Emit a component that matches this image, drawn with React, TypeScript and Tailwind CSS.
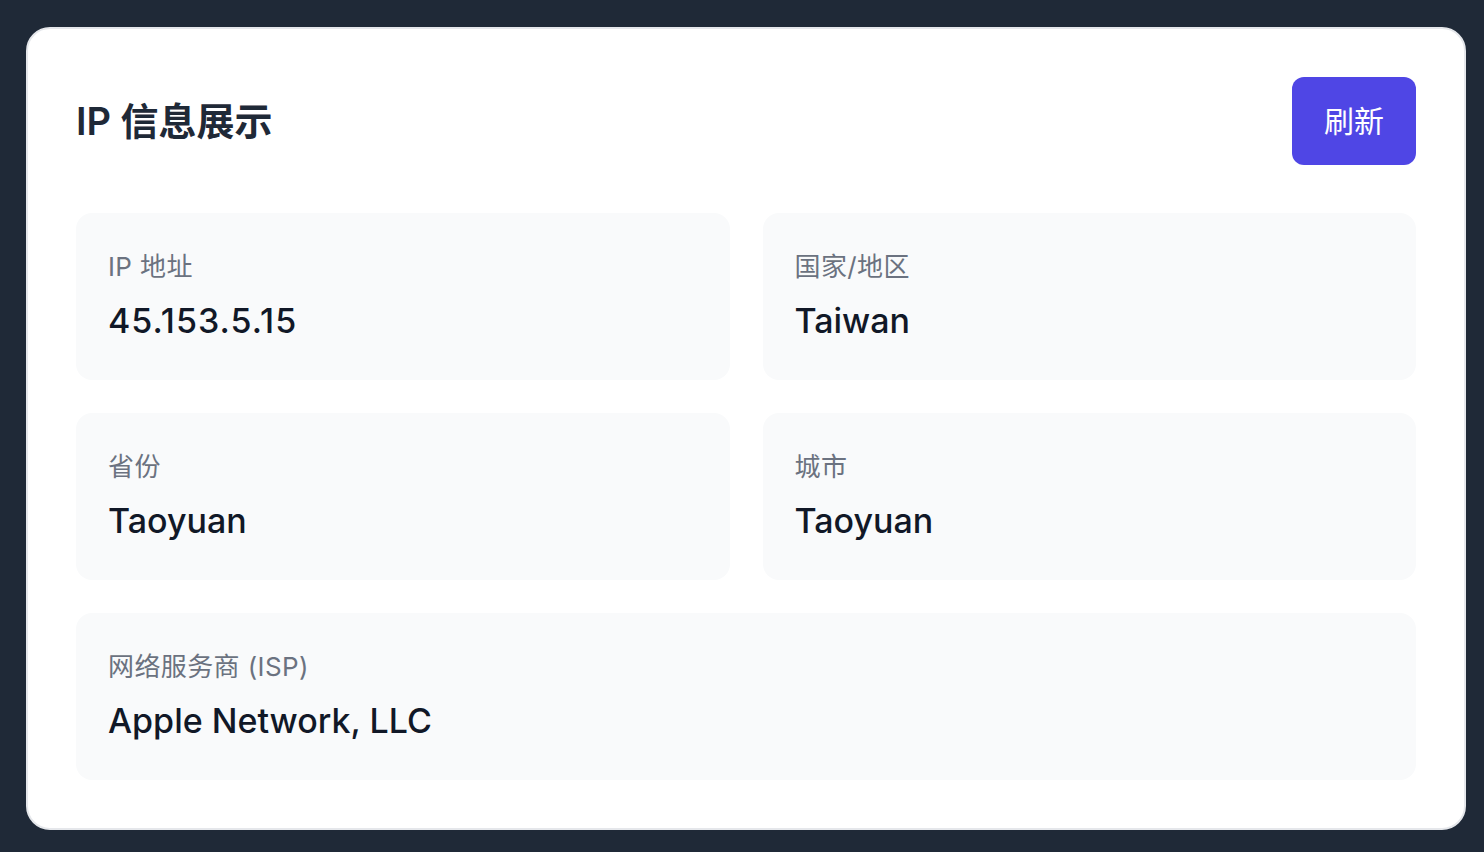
const fields = [
  { label: 'IP 地址', value: '45.153.5.15', digits: true },
  { label: '国家/地区', value: 'Taiwan' },
  { label: '省份', value: 'Taoyuan' },
  { label: '城市', value: 'Taoyuan' },
  { label: '网络服务商 (ISP)', value: 'Apple Network, LLC', wide: true },
];

export default function App() {
  return (
    <div
      className="min-h-screen bg-[#1f2937] pt-[27px] pl-[26px] pr-[18px] pb-[21px]"
      style={{ fontFamily: 'Inter, "Noto Sans CJK SC", sans-serif' }}
    >
      <div className="rounded-3xl border-2 border-[#e5e7eb] bg-white p-12">
        {/* Header */}
        <div className="flex items-center justify-between">
          <h1 className="text-[38px] font-semibold leading-none text-[#1f2937]">
            IP 信息展示
          </h1>
          <button className="h-[88px] rounded-xl bg-[#4f46e5] px-8 text-[30px] text-white">
            刷新
          </button>
        </div>

        {/* Info grid */}
        <div className="mt-12 grid grid-cols-2 gap-[33px]">
          {fields.map((f) => (
            <div
              key={f.label}
              className={`h-[167px] rounded-2xl bg-[#f9fafb] px-8 pt-[34px] ${
                f.wide ? 'col-span-2' : ''
              }`}
            >
              <p className="text-[26px] leading-[39px] tracking-[0.015em] text-[#6b7280]">
                {f.label}
              </p>
              <p
                className={`mt-[11px] text-[34px] font-medium leading-[48px] text-[#111827] ${
                  f.digits ? 'tracking-[0.03em]' : ''
                }`}
              >
                {f.value}
              </p>
            </div>
          ))}
        </div>
      </div>
    </div>
  );
}
